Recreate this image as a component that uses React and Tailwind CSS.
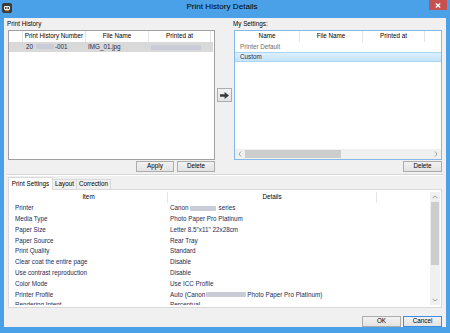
import React from "react";

function Btn({ children, className }) {
  return (
    <div
      className={
        "h-[11px] flex items-center justify-center border bg-linear-to-b from-[#f2f2f2] to-[#e3e3e3] text-black " +
        className
      }
    >
      {children}
    </div>
  );
}

function Blur({ className }) {
  return <span className={"inline-block h-[5px] rounded-[1px] bg-[#c9ccd6] blur-[0.6px] " + className} />;
}

function ChevL() {
  return (
    <svg width="4" height="6" viewBox="0 0 4 6">
      <path d="M3 0.5L1 3l2 2.5" fill="none" stroke="#9a9a9a" strokeWidth="0.9" />
    </svg>
  );
}
function ChevR() {
  return (
    <svg width="4" height="6" viewBox="0 0 4 6">
      <path d="M1 0.5L3 3l-2 2.5" fill="none" stroke="#9a9a9a" strokeWidth="0.9" />
    </svg>
  );
}
function ChevU() {
  return (
    <svg width="6" height="4" viewBox="0 0 6 4">
      <path d="M0.5 3L3 1l2.5 2" fill="none" stroke="#9a9a9a" strokeWidth="0.9" />
    </svg>
  );
}
function ChevD() {
  return (
    <svg width="6" height="4" viewBox="0 0 6 4">
      <path d="M0.5 1L3 3l2.5-2" fill="none" stroke="#9a9a9a" strokeWidth="0.9" />
    </svg>
  );
}

const rows = [
  ["Printer", <span className="flex items-center"><span>Canon</span><Blur className="w-[26px] ml-[1px] mr-[3px]" /><span>series</span></span>],
  ["Media Type", "Photo Paper Pro Platinum"],
  ["Paper Size", "Letter 8.5\"x11\" 22x28cm"],
  ["Paper Source", "Rear Tray"],
  ["Print Quality", "Standard"],
  ["Clear coat the entire page", "Disable"],
  ["Use contrast reproduction", "Disable"],
  ["Color Mode", "Use ICC Profile"],
  ["Printer Profile", <span className="flex items-center"><span>Auto (Canon</span><Blur className="w-[40px] mx-[1px]" /><span>Photo Paper Pro Platinum)</span></span>],
  ["Rendering Intent", "Perceptual"],
];

export default function App() {
  return (
    <div className="w-[450px] h-[333px] bg-[#4aa1e8] flex flex-col font-['Liberation_Sans',Arial,sans-serif] text-[6.3px] leading-none text-black overflow-hidden">
      {/* Title bar */}
      <div className="h-[18px] flex items-start relative">
        <div className="w-[10px] h-[10px] ml-[2px] mt-[3px] rounded-[2px] bg-[#3a3a3a] flex items-center justify-center">
          <svg width="8" height="8" viewBox="0 0 8 8">
            <rect x="1" y="2" width="6" height="4" rx="1" fill="#f5f5f5" />
            <circle cx="2.8" cy="4" r="0.9" fill="#333" />
            <circle cx="5.2" cy="4" r="0.9" fill="#333" />
            <rect x="2" y="6.2" width="4" height="1" fill="#e0902a" />
          </svg>
        </div>
        <div className="flex-1 h-[15px] flex items-center justify-center text-[8.1px] text-black pl-[3px]">
          Print History Details
        </div>
        <div className="w-[18px] h-[10px] mr-[3px] bg-[#c75050] flex items-center justify-center">
          <svg width="6" height="5" viewBox="0 0 6 5">
            <path d="M0.8 0.5L5.2 4.5M5.2 0.5L0.8 4.5" stroke="#fff" strokeWidth="1.3" />
          </svg>
        </div>
      </div>

      {/* Body */}
      <div className="mx-[4px] h-[309px] bg-[#f0f0f0] flex flex-col px-[4px]">
        {/* Top section */}
        <div className="flex">
          {/* Left column */}
          <div className="w-[207px] flex flex-col">
            <div className="h-[12px] flex items-center -ml-[1px]">Print History</div>
            <div className="h-[130px] border border-[#a0a0a0] bg-white flex flex-col">
              <div className="h-[11px] flex">
                <div className="w-[14px] border-r border-[#e5e5e5]" />
                <div className="w-[63px] border-r border-[#e5e5e5] flex items-center justify-center">Print History Number</div>
                <div className="w-[63px] border-r border-[#e5e5e5] flex items-center justify-center">File Name</div>
                <div className="w-[62px] border-r border-[#e5e5e5] flex items-center justify-center">Printed at</div>
                <div className="flex-1" />
              </div>
              <div className="h-[10px] mr-[1px] bg-[#d9d9d9] flex items-center text-[#1e2a50]">
                <div className="w-[14px]" />
                <div className="w-[63px] pl-[3px] flex items-center">
                  <span>20</span>
                  <Blur className="w-[18px] ml-[3px] mr-[1px]" />
                  <span>-001</span>
                </div>
                <div className="w-[63px] pl-[2px]">IMG_01.jpg</div>
                <div className="w-[62px] pl-[2px] flex items-center">
                  <Blur className="w-[50px]" />
                </div>
              </div>
            </div>
            <div className="flex justify-end gap-[3px] mt-[1px]">
              <Btn className="w-[38px] border-[#acacac]">Apply</Btn>
              <Btn className="w-[38px] border-[#acacac]">Delete</Btn>
            </div>
          </div>

          {/* Arrow column */}
          <div className="w-[19px] pt-[12px] pl-[2px]">
            <div className="h-[130px] flex items-center">
              <div className="w-[15px] h-[14px] border border-[#acacac] bg-linear-to-b from-[#f2f2f2] to-[#e3e3e3] flex items-center justify-center">
                <svg width="9" height="7" viewBox="0 0 9 7">
                  <path d="M0 2.2h4.6V0L9 3.5 4.6 7V4.8H0z" fill="#3a3a3a" />
                </svg>
              </div>
            </div>
          </div>

          {/* Right column */}
          <div className="w-[208px] flex flex-col">
            <div className="h-[12px] flex items-center -ml-[1px]">My Settings:</div>
            <div className="h-[130px] border border-[#84b8e8] bg-white flex flex-col">
              <div className="h-[11px] flex">
                <div className="w-[65px] border-r border-[#e5e5e5] flex items-center justify-center">Name</div>
                <div className="w-[63px] border-r border-[#e5e5e5] flex items-center justify-center">File Name</div>
                <div className="w-[62px] border-r border-[#e5e5e5] flex items-center justify-center">Printed at</div>
                <div className="flex-1" />
              </div>
              <div className="h-[10px] flex items-center pl-[5px] text-[#6d6d6d]">Printer Default</div>
              <div className="h-[10px] flex items-center pl-[5px] text-[#1e2a50] bg-linear-to-b from-[#dcf0fd] to-[#c4e4fa] border-y border-[#a9d6f6]">Custom</div>
              <div className="flex-1" />
              <div className="h-[10px] bg-[#f0f0f0] flex items-center">
                <div className="w-[10px] flex items-center justify-center"><ChevL /></div>
                <div className="w-[96px] h-[8px] bg-[#cdcdcd]" />
                <div className="flex-1" />
                <div className="w-[10px] flex items-center justify-center"><ChevR /></div>
              </div>
            </div>
            <div className="flex justify-end mt-[1px]">
              <Btn className="w-[39px] border-[#acacac]">Delete</Btn>
            </div>
          </div>
        </div>

        {/* Separator */}
        <div className="mt-[2px] -mx-[1px] border-t border-[#d5d5d5] border-b border-b-white" />

        {/* Tabs */}
        <div className="mt-[1px] h-[12px] flex items-end">
          <div className="w-[45px] h-[13px] -mb-px relative z-10 bg-white border border-b-0 border-[#d9d9d9] flex items-center justify-center">
            Print Settings
          </div>
          <div className="w-[24px] h-[10px] border-t border-r border-[#d9d9d9] bg-[#f0f0f0] flex items-center justify-center">
            Layout
          </div>
          <div className="w-[34px] h-[10px] border-t border-r border-[#d9d9d9] bg-[#f0f0f0] flex items-center justify-center">
            Correction
          </div>
        </div>

        {/* Tab panel */}
        <div className="h-[119px] bg-white border border-[#d9d9d9] pt-[2px] pl-[1px]">
          <div className="w-[430px] h-[113px] flex overflow-hidden">
            <div className="flex-1 flex flex-col overflow-hidden">
              <div className="h-[11px] flex shrink-0">
                <div className="w-[158px] border-r border-[#e5e5e5] flex items-center justify-center">Item</div>
                <div className="w-[209px] border-r border-[#e5e5e5] flex items-center justify-center">Details</div>
                <div className="flex-1" />
              </div>
              {rows.map(([k, v], i) => (
                <div key={i} className="h-[10.8px] shrink-0 flex items-center text-[#1e2a50]">
                  <div className="w-[158px] pl-[5px]">{k}</div>
                  <div className="pl-[2px]">{v}</div>
                </div>
              ))}
            </div>
            <div className="w-[10px] bg-[#f0f0f0] flex flex-col items-center">
              <div className="h-[10px] flex items-center justify-center"><ChevU /></div>
              <div className="w-[8px] h-[63px] bg-[#cdcdcd]" />
              <div className="flex-1" />
              <div className="h-[10px] flex items-center justify-center"><ChevD /></div>
            </div>
          </div>
        </div>

        {/* Bottom buttons */}
        <div className="mt-[8px] flex justify-end gap-[2px]">
          <Btn className="w-[39px] h-[10px] border-[#acacac]">OK</Btn>
          <Btn className="w-[39px] h-[10px] border-[#3d8ee0]">Cancel</Btn>
        </div>
      </div>
    </div>
  );
}
